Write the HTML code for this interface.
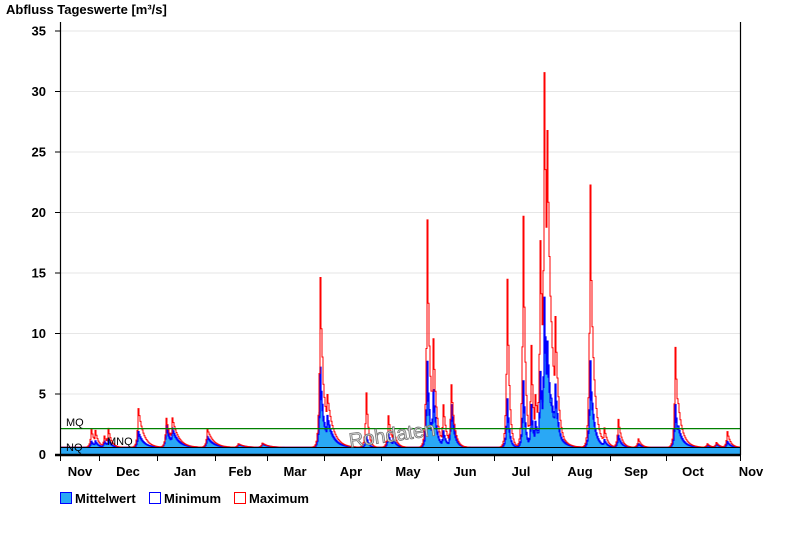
<!DOCTYPE html>
<html><head><meta charset="utf-8"><style>
body{margin:0;background:#fff;width:800px;height:550px;overflow:hidden;font-family:"Liberation Sans",sans-serif}
</style></head><body>
<svg id="s" width="800" height="550" xmlns="http://www.w3.org/2000/svg" style="position:absolute;left:0;top:0">
<text x="6" y="14" font-family="Liberation Sans" font-weight="bold" font-size="13">Abfluss Tageswerte [m³/s]</text>
<g id="grid" stroke="#e6e6e6" stroke-width="1"></g>
<g id="data"></g>
<line x1="60" y1="428.6" x2="740" y2="428.6" stroke="#008000" stroke-width="1.2"/>
<line x1="60" y1="447.5" x2="740" y2="447.5" stroke="#000" stroke-width="1"/>
<text x="66" y="426" font-size="11" fill="#000">MQ</text>
<text x="66" y="451" font-size="11" fill="#000">NQ</text>
<text x="107" y="445" font-size="11" fill="#000">MNQ</text>
<text x="348" y="441" font-size="20" fill="#ddd" stroke="#777" stroke-width="0.8" transform="rotate(-8 395 430)" font-family="Liberation Sans">Rohdaten</text>
<line x1="60.5" y1="22" x2="60.5" y2="455" stroke="#000" stroke-width="1.2"/>
<line x1="740.5" y1="22" x2="740.5" y2="455" stroke="#000" stroke-width="1.2"/>
<line x1="55" y1="455" x2="741" y2="455" stroke="#000" stroke-width="2.5"/>
<g id="axis" font-family="Liberation Sans" font-weight="bold" font-size="13"></g>
<rect x="60.5" y="492.5" width="11" height="11" fill="#2aa8f5" stroke="#0000ff"/>
<text x="75" y="503" font-weight="bold" font-size="13">Mittelwert</text>
<rect x="149.5" y="492.5" width="11" height="11" fill="#fff" stroke="#0000ff"/>
<text x="164" y="503" font-weight="bold" font-size="13">Minimum</text>
<rect x="234.5" y="492.5" width="11" height="11" fill="#fff" stroke="#ff0000"/>
<text x="249" y="503" font-weight="bold" font-size="13">Maximum</text>
</svg>
<script>
var NS="http://www.w3.org/2000/svg";
function el(t,a,p){var e=document.createElementNS(NS,t);for(var k in a)e.setAttribute(k,a[k]);p.appendChild(e);return e;}
var g=document.getElementById('grid'),ax=document.getElementById('axis'),d=document.getElementById('data');
function Y(v){return 454-v*12.1;}
for(var v=5;v<=35;v+=5){el('line',{x1:61,x2:740,y1:Y(v)+.5,y2:Y(v)+.5},g);}
for(var v=0;v<=35;v+=5){el('line',{x1:55,x2:60,y1:Y(v)+.5,y2:Y(v)+.5,stroke:'#000'},ax);var t=el('text',{x:46,y:Y(v)+5,'text-anchor':'end'},ax);t.textContent=v;}
var ticks=[60,99,157,215,267,324,381,438,494,552,610,666,740];
var names=['Nov','Dec','Jan','Feb','Mar','Apr','May','Jun','Jul','Aug','Sep','Oct','Nov'];
ticks.forEach(function(x,i){el('line',{x1:x+.5,x2:x+.5,y1:455,y2:461,stroke:'#000'},ax);});
var lx=[80,128,185,240,295,351,408,465,521,580,636,693,751];
names.forEach(function(n,i){var t=el('text',{x:lx[i],y:476,'text-anchor':'middle'},ax);t.textContent=n;});
var P=[[91,1.5,0.5,3],[95,1.3,0.5,3],[104,0.9,0.5,3],[108,1.5,0.6,3],[138,3.2,1.3,5],[166,2.4,1.8,4],[172,2.3,1.5,6],[207,1.5,0.9,6],[238,0.3,0.25,6],[262,0.35,0.3,6],
[320,13.8,6.5,2.5],[322,5,2.5,5],[327,3.7,2.3,6],[366,4.5,1,2],[388,2.6,1.1,3],[393,1.5,0.7,3],
[427,18.5,7,2],[429,6,2,4],[433,8.2,4.5,3],[443,3.4,1.3,3],[451,5.1,3.5,3],
[507,13.9,4,2],[523,19.1,5.5,2],[531,8.3,3.5,2],[535,4,2,4],[540,16.5,6,3],[544,29.3,11.8,3],[547,23,7.5,4],[555,9.3,4.5,3],[551,4,3,6],
[590,21.3,7,2],[592,8,3,4],[604,1.5,0.6,3],[618,2.3,1,3],[638,0.7,0.3,3],[675,8.2,3.5,2.5],[678,3,1.5,5],[707,0.3,0.2,3],[716,0.4,0.3,3],[727,1.3,0.5,3]];
function val(x,idx,f){var m=0,s=0;P.forEach(function(p){var dx=x-p[0];var h=p[idx]*f;var c=dx>=0?h*Math.exp(-dx/p[3]):h*Math.exp(dx/1.2);if(c>m)m=c;s+=c;});return 0.55+m+0.25*(s-m);}
function path(idx,f,close){var s='M61,'+(close?454:Y(val(61,idx,f)).toFixed(1));for(var x=61;x<=740;x++){var y=Y(val(x,idx,f)).toFixed(1);s+=' L'+x+','+y+' L'+(x+1)+','+y;}if(close)s+=' L740,454 Z';return s;}
el('path',{d:path(2,1,true),fill:'#2aa8f5',stroke:'none'},d);
el('path',{d:path(2,0.85,false),fill:'none',stroke:'#0000ff','stroke-width':1},d);
el('path',{d:path(2,1,false),fill:'none',stroke:'#0000ff','stroke-width':1.2},d);
el('path',{d:path(1,1,false),fill:'none',stroke:'#ff0000','stroke-width':1},d);
</script>
</body></html>
